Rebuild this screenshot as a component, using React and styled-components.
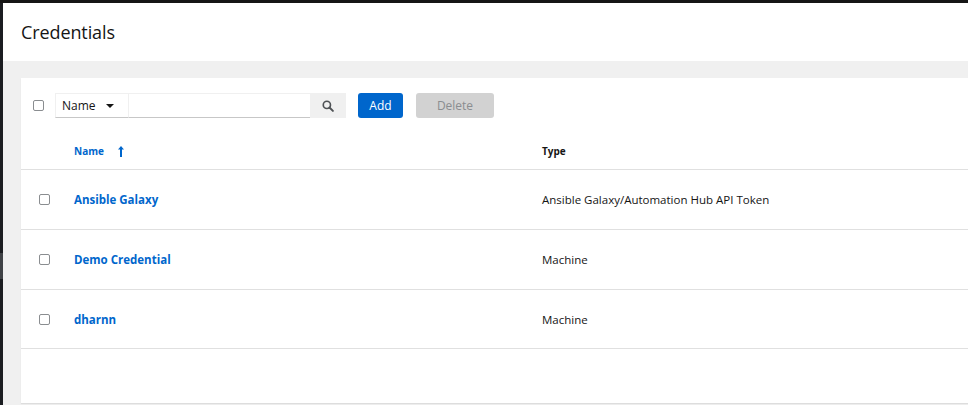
import React from "react";
import styled, { createGlobalStyle } from "styled-components";

const Global = createGlobalStyle`
  html, body { margin: 0; padding: 0; background: #f0f0f0; }
  body { font-family: "Open Sans", "Liberation Sans", sans-serif; color: #151515; }
  * { box-sizing: border-box; }
`;

const Page = styled.div`
  width: 968px;
  height: 405px;
  display: flex;
  flex-direction: column;
  overflow: hidden;
`;

const TopBar = styled.div`
  height: 3px;
  background: #151515;
  flex: none;
`;

const Body = styled.div`
  flex: 1;
  display: flex;
  min-height: 0;
`;

const Sidebar = styled.nav`
  width: 3px;
  flex: none;
  background: #1b1d21;
  display: flex;
  flex-direction: column;
  padding-top: 250px;
`;

const NavItem = styled.div`
  height: 26px;
  background: #3f4246;
`;

const Main = styled.main`
  flex: 1;
  display: flex;
  flex-direction: column;
  background: #f0f0f0;
  min-width: 0;
`;

const Header = styled.header`
  height: 58px;
  background: #fff;
  display: flex;
  align-items: center;
  padding-left: 18px;
  flex: none;
`;

const Title = styled.h1`
  margin: 0;
  font-family: "Open Sans", sans-serif;
  font-size: 18px;
  font-weight: 400;
  color: #151515;
  letter-spacing: -0.1px;
`;

const Content = styled.section`
  flex: 1;
  padding: 17px 0 2px 18px;
  display: flex;
  min-height: 0;
`;

const Card = styled.div`
  flex: 1;
  background: #fff;
  box-shadow: 0 1px 1px rgba(3, 3, 3, 0.08);
  display: flex;
  flex-direction: column;
`;

const Toolbar = styled.div`
  display: flex;
  align-items: center;
  padding: 15px 0 0 12px;
  height: 40px;
`;

const Checkbox = styled.span`
  display: inline-block;
  width: 11px;
  height: 11px;
  border: 1.5px solid #8a8d90;
  border-radius: 2px;
  background: #fff;
  flex: none;
`;

const SearchGroup = styled.div`
  display: flex;
  height: 25px;
  margin-left: 11px;
`;

const Select = styled.div`
  width: 74px;
  display: flex;
  align-items: center;
  justify-content: space-between;
  padding: 0 14px 0 6px;
  font-size: 12px;
  color: #151515;
  border: 1px solid #f0f0f0;
  border-bottom: 1px solid #c7c7c7;
`;

const Caret = styled.span`
  width: 0;
  height: 0;
  border-left: 4px solid transparent;
  border-right: 4px solid transparent;
  border-top: 4px solid #151515;
`;

const TextInput = styled.div`
  width: 181px;
  border-top: 1px solid #f0f0f0;
  border-bottom: 1px solid #c7c7c7;
`;

const SearchButton = styled.div`
  width: 36px;
  background: #f0f0f0;
  display: flex;
  align-items: center;
  justify-content: center;
`;

const Button = styled.div`
  height: 25px;
  display: flex;
  align-items: center;
  justify-content: center;
  border-radius: 3px;
  font-size: 12px;
  margin-left: ${(p) => p.$gap}px;
  width: ${(p) => p.$w}px;
  background: ${(p) => (p.$primary ? "#0066cc" : "#d2d2d2")};
  color: ${(p) => (p.$primary ? "#fff" : "#8a8d90")};
`;

const Table = styled.div`
  display: flex;
  flex-direction: column;
`;

const Row = styled.div`
  display: grid;
  grid-template-columns: 35px 468px 1fr;
  align-items: center;
  height: ${(p) => p.$h}px;
  border-bottom: 1px solid #e0e0e0;
  padding-left: 18px;
`;

const HeadRow = styled(Row)`
  align-items: end;
  padding-bottom: 11px;
`;

const HeadCell = styled.div`
  font-size: 10px;
  font-weight: 700;
  color: ${(p) => (p.$active ? "#0066cc" : "#151515")};
  display: flex;
  align-items: center;
  gap: 14px;
`;

const NameLink = styled.a`
  font-size: 11.5px;
  font-weight: 700;
  color: #0066cc;
  text-decoration: none;
`;

const Cell = styled.div`
  font-size: 11.5px;
  color: #151515;
`;

const rows = [
  { name: "Ansible Galaxy", type: "Ansible Galaxy/Automation Hub API Token", h: 60 },
  { name: "Demo Credential", type: "Machine", h: 60 },
  { name: "dharnn", type: "Machine", h: 59 },
];

export default function App() {
  return (
    <Page>
      <Global />
      <TopBar />
      <Body>
        <Sidebar>
          <NavItem />
        </Sidebar>
        <Main>
          <Header>
            <Title>Credentials</Title>
          </Header>
          <Content>
            <Card>
              <Toolbar>
                <Checkbox />
                <SearchGroup>
                  <Select>
                    Name
                    <Caret />
                  </Select>
                  <TextInput />
                  <SearchButton>
                    <svg width="12" height="12" viewBox="0 0 16 16">
                      <circle cx="6.5" cy="6.5" r="4.8" fill="none" stroke="#4f5255" strokeWidth="2.2" />
                      <line x1="10" y1="10" x2="14.5" y2="14.5" stroke="#4f5255" strokeWidth="2.6" strokeLinecap="round" />
                    </svg>
                  </SearchButton>
                </SearchGroup>
                <Button $primary $gap={12} $w={45}>Add</Button>
                <Button $gap={13} $w={78}>Delete</Button>
              </Toolbar>
              <Table>
                <HeadRow $h={52}>
                  <span />
                  <HeadCell $active>
                    Name
                    <svg width="6" height="11" viewBox="0 0 6 11">
                      <path d="M3 0 L6 3.5 H4 V11 H2 V3.5 H0 Z" fill="#0066cc" />
                    </svg>
                  </HeadCell>
                  <HeadCell>Type</HeadCell>
                </HeadRow>
                {rows.map((r) => (
                  <Row key={r.name} $h={r.h}>
                    <Checkbox />
                    <NameLink href="#">{r.name}</NameLink>
                    <Cell>{r.type}</Cell>
                  </Row>
                ))}
              </Table>
            </Card>
          </Content>
        </Main>
      </Body>
    </Page>
  );
}
